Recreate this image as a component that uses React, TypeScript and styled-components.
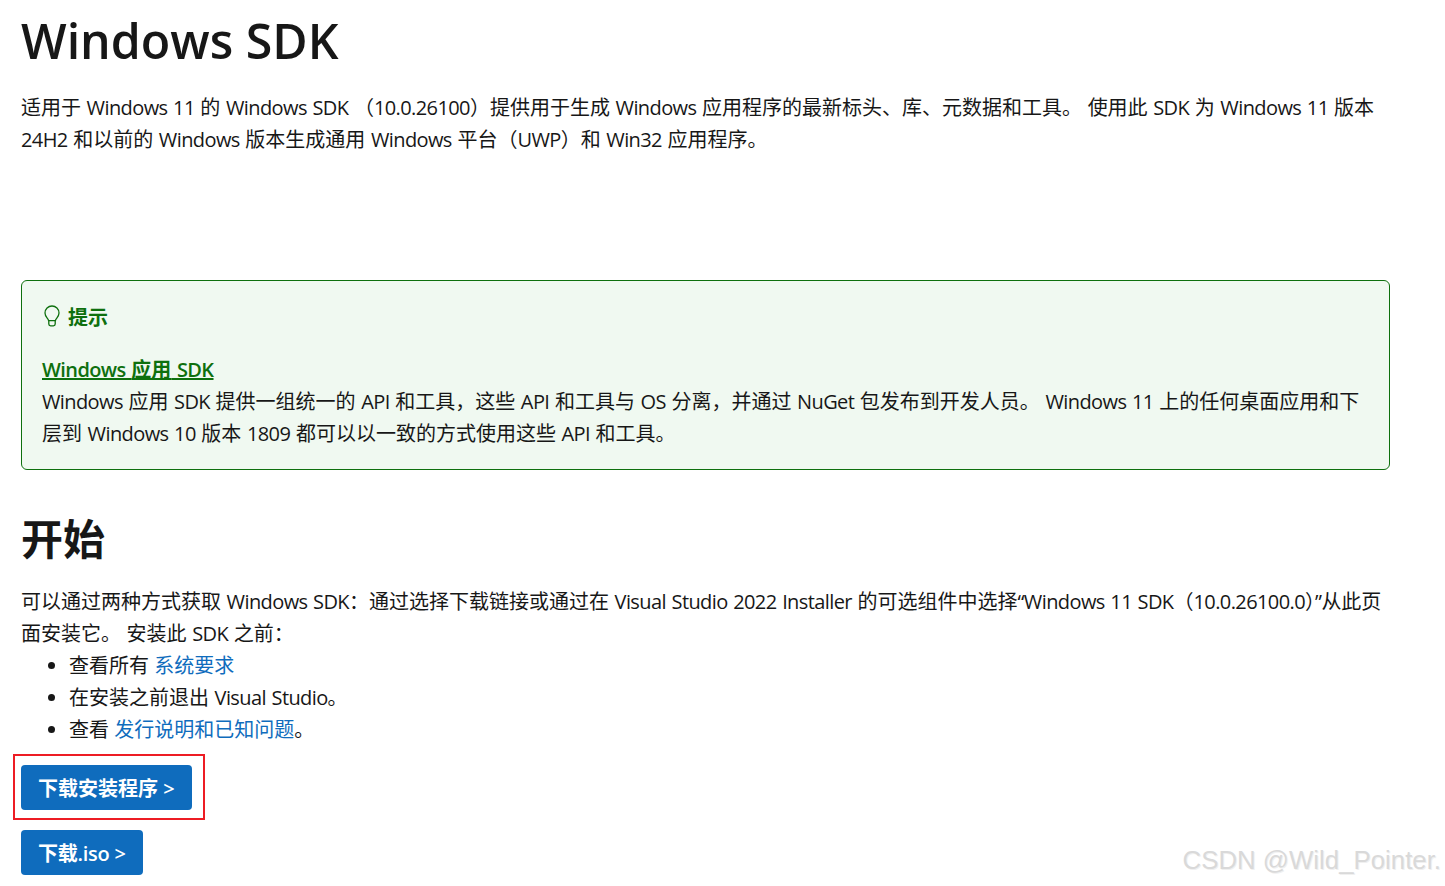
import React from 'react'
import styled, { createGlobalStyle } from 'styled-components'

const GlobalStyle = createGlobalStyle`
  html, body {
    margin: 0;
    padding: 0;
    height: 886px;
    overflow: hidden;
    background: #fff;
  }
  body {
    font-family: 'Open Sans', 'Noto Sans CJK SC', sans-serif;
    color: #171717;
  }
`

const Page = styled.main`
  position: relative;
  width: 1445px;
  height: 886px;
  box-sizing: border-box;
  padding: 0 0 0 21px;
  overflow: hidden;
`

const Title = styled.h1`
  margin: 8px 0 0;
  font-size: 48.3px;
  line-height: 64px;
  font-weight: 600;
`

const Paragraph = styled.div`
  margin: 20px 0 0;
  font-size: 20px;
  line-height: 32px;
`

const TextLine = styled.div`
  white-space: pre;
`

const LatinRun = styled.span`
  letter-spacing: -0.6px;
  word-spacing: 1px;
`

const Tip = styled.section`
  box-sizing: border-box;
  width: 1369px;
  height: 190px;
  margin-top: 124px;
  padding: 19px 20px 0;
  background: #f0f9f1;
  border: 1px solid #0e700e;
  border-radius: 6px;
`

const TipHeading = styled.div`
  display: flex;
  align-items: center;
  gap: 6px;
  height: 32px;
  color: #0e700e;
  font-size: 20px;
  font-weight: 700;
`

const TipLink = styled.a`
  display: block;
  margin-top: 22px;
  color: #0e700e;
  font-size: 20px;
  font-weight: 600;
  line-height: 32px;
  text-decoration: underline;
`

const TipText = styled.div`
  font-size: 20px;
  line-height: 32px;
`

const SectionTitle = styled.h2`
  margin: 39px 0 0;
  font-size: 42px;
  line-height: 60px;
  font-weight: 700;
`

const BodyText = styled(Paragraph)`
  margin-top: 17px;
`

const List = styled.ul`
  margin: 0;
  padding: 0 0 0 48px;
  font-size: 20px;
  line-height: 32px;
`

const Link = styled.a`
  color: #0f6cbd;
`

const Highlight = styled.div`
  width: 192px;
  height: 66px;
  box-sizing: border-box;
  margin: 8px 0 0 -8px;
  padding: 9px 0 0 6px;
  border: 2px solid #ed1c24;
`

const DownloadButton = styled.a`
  display: inline-flex;
  align-items: center;
  height: 45px;
  box-sizing: border-box;
  padding: 0 17px;
  background: #0f6cbd;
  border-radius: 4px;
  color: #fff;
  font-size: 20px;
  font-weight: 600;
  white-space: pre;
`

const SecondButton = styled(DownloadButton)`
  margin-top: 10px;
  letter-spacing: -0.25px;
`

const Watermark = styled.div`
  position: absolute;
  right: 4px;
  top: 843px;
  color: #d9d9d9;
  font-family: 'Liberation Sans', sans-serif;
  font-size: 25.8px;
  line-height: 34px;
  text-shadow: 1px 1px 0 #f0f0f0;
`

// the reference's latin face is narrower than Open Sans, CJK keeps its full width
function Mixed({ text }: { text: string }) {
  return (
    <>
      {text.split(/([\u0000-\u2fff]+)/).map((part, i) =>
        i % 2 === 1 ? <LatinRun key={i}>{part}</LatinRun> : part ? <span key={i}>{part}</span> : null,
      )}
    </>
  )
}

function Lines({ lines }: { lines: string[] }) {
  return (
    <>
      {lines.map((line) => (
        <TextLine key={line}>
          <Mixed text={line} />
        </TextLine>
      ))}
    </>
  )
}

function BulbIcon() {
  return (
    <svg width="20" height="22" viewBox="0 0 20 22" fill="none" stroke="#0e700e" strokeWidth="1.3">
      <path d="M6.6 15.6C6.2 13.4 3 12 3 8a7 7 0 0 1 14 0c0 4-3.200 5.400-3.600 7.600z" />
      <path d="M6.800 15.600v3.400a1.800 1.800 0 0 0 1.800 1.800h2.800a1.800 1.800 0 0 0 1.800-1.800v-3.400" />
    </svg>
  )
}

function App() {
  return (
    <Page>
      <GlobalStyle />
      <Title>Windows SDK</Title>
      <Paragraph>
        <Lines
          lines={[
            '适用于 Windows 11 的 Windows SDK （10.0.26100）提供用于生成 Windows 应用程序的最新标头、库、元数据和工具。 使用此 SDK 为 Windows 11 版本',
            '24H2 和以前的 Windows 版本生成通用 Windows 平台（UWP）和 Win32 应用程序。',
          ]}
        />
      </Paragraph>
      <Tip>
        <TipHeading>
          <BulbIcon />
          提示
        </TipHeading>
        <TipLink href="#">
          <Mixed text="Windows 应用 SDK" />
        </TipLink>
        <TipText>
          <Lines
            lines={[
              'Windows 应用 SDK 提供一组统一的 API 和工具，这些 API 和工具与 OS 分离，并通过 NuGet 包发布到开发人员。 Windows 11 上的任何桌面应用和下',
              '层到 Windows 10 版本 1809 都可以以一致的方式使用这些 API 和工具。',
            ]}
          />
        </TipText>
      </Tip>
      <SectionTitle>开始</SectionTitle>
      <BodyText>
        <Lines
          lines={[
            '可以通过两种方式获取 Windows SDK：通过选择下载链接或通过在 Visual Studio 2022 Installer 的可选组件中选择“Windows 11 SDK（10.0.26100.0）”从此页',
            '面安装它。 安装此 SDK 之前：',
          ]}
        />
      </BodyText>
      <List>
        <li>
          查看所有 <Link>系统要求</Link>
        </li>
        <li>
          <Mixed text="在安装之前退出 Visual Studio。" />
        </li>
        <li>
          查看 <Link>发行说明和已知问题</Link>。
        </li>
      </List>
      <Highlight>
        <DownloadButton>下载安装程序 {'>'}</DownloadButton>
      </Highlight>
      <SecondButton>下载.iso {'>'}</SecondButton>
      <Watermark>CSDN @Wild_Pointer.</Watermark>
    </Page>
  )
}

export default App
